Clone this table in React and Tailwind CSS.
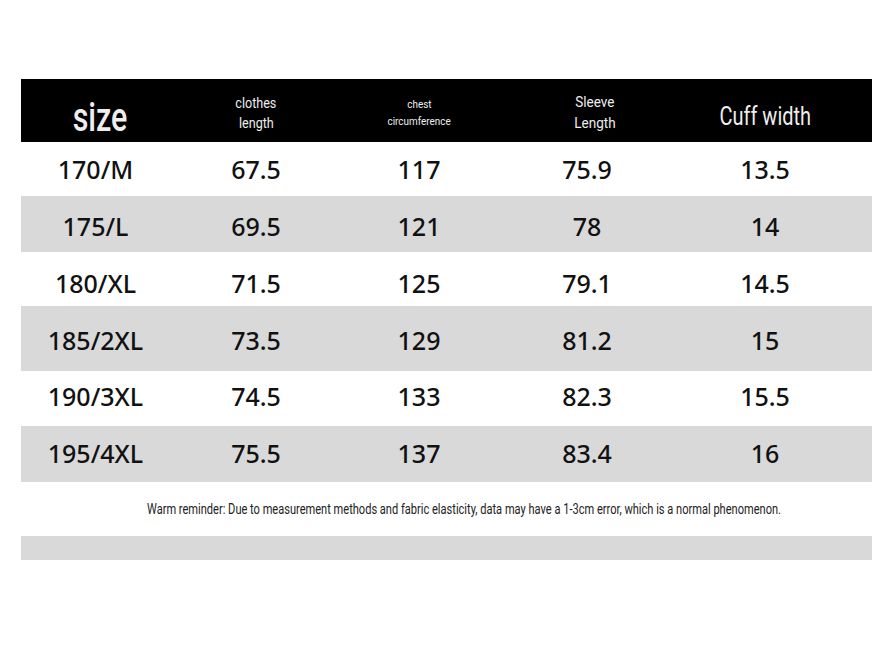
import React from "react";

const cols = "grid grid-cols-[149px_172px_154px_182px_194px]";

const rows = [
  { h: "h-[54px] pt-[2px]", bg: "bg-white", v: ["170/M", "67.5", "117", "75.9", "13.5"] },
  { h: "h-[56px] pt-[6px]", bg: "bg-[#d9d9d9]", v: ["175/L", "69.5", "121", "78", "14"] },
  { h: "h-[54px] pt-[10px]", bg: "bg-white", v: ["180/XL", "71.5", "125", "79.1", "14.5"] },
  { h: "h-[65px] pt-[5px]", bg: "bg-[#d9d9d9]", v: ["185/2XL", "73.5", "129", "81.2", "15"] },
  { h: "h-[55px] pb-[3px]", bg: "bg-white", v: ["190/3XL", "74.5", "133", "82.3", "15.5"] },
  { h: "h-[56px]", bg: "bg-[#d9d9d9]", v: ["195/4XL", "75.5", "137", "83.4", "16"] },
];

const cond = { fontFamily: "Roboto, 'Liberation Sans', sans-serif" };

export default function App() {
  return (
    <div className="w-[889px] h-[667px] bg-white pt-[79px] pl-[21px]" style={{ fontFamily: "'Noto Sans', sans-serif" }}>
      <div className="w-[851px]">
        <div className={`${cols} h-[63px] bg-black text-[#eeeeee]`} style={cond}>
          <div className="flex items-center justify-center pt-[14px] pl-[10px]">
            <span className="inline-block scale-x-[0.76] text-[40px] leading-none font-medium">size</span>
          </div>
          <div className="flex flex-col items-center justify-center text-[14px] leading-[20px] pt-[4px]">
            <span className="inline-block scale-x-[0.9]">clothes</span>
            <span className="inline-block scale-x-[0.9]">length</span>
          </div>
          <div className="flex flex-col items-center justify-center text-[11px] leading-[17px] pt-[4px]">
            <span className="inline-block scale-x-[0.9]">chest</span>
            <span className="inline-block scale-x-[0.9]">circumference</span>
          </div>
          <div className="flex flex-col items-center justify-center text-[15px] leading-[21px] pl-[16px] pt-[4px]">
            <span className="inline-block scale-x-[0.9]">Sleeve</span>
            <span className="inline-block scale-x-[0.9]">Length</span>
          </div>
          <div className="flex items-center justify-center pr-[20px] pt-[11px]">
            <span className="inline-block scale-x-[0.8] text-[25px] leading-none">Cuff width</span>
          </div>
        </div>
        {rows.map((r, i) => (
          <div key={i} className={`${cols} ${r.h} ${r.bg} text-[25px] font-medium text-[#111111]`}>
            {r.v.map((t, j) => (
              <div key={j} className={`flex items-center justify-center ${j === 4 ? "pr-[20px]" : ""}`}>
                {t}
              </div>
            ))}
          </div>
        ))}
        <div className="h-[54px] flex items-center pl-[126px] pt-[1px] text-[#222222]" style={cond}>
          <span className="inline-block origin-left scale-x-[0.79] text-[14px] whitespace-nowrap">
            Warm reminder: Due to measurement methods and fabric elasticity, data may have a 1-3cm error, which is a normal phenomenon.
          </span>
        </div>
        <div className="h-[24px] bg-[#d9d9d9]"></div>
      </div>
    </div>
  );
}
